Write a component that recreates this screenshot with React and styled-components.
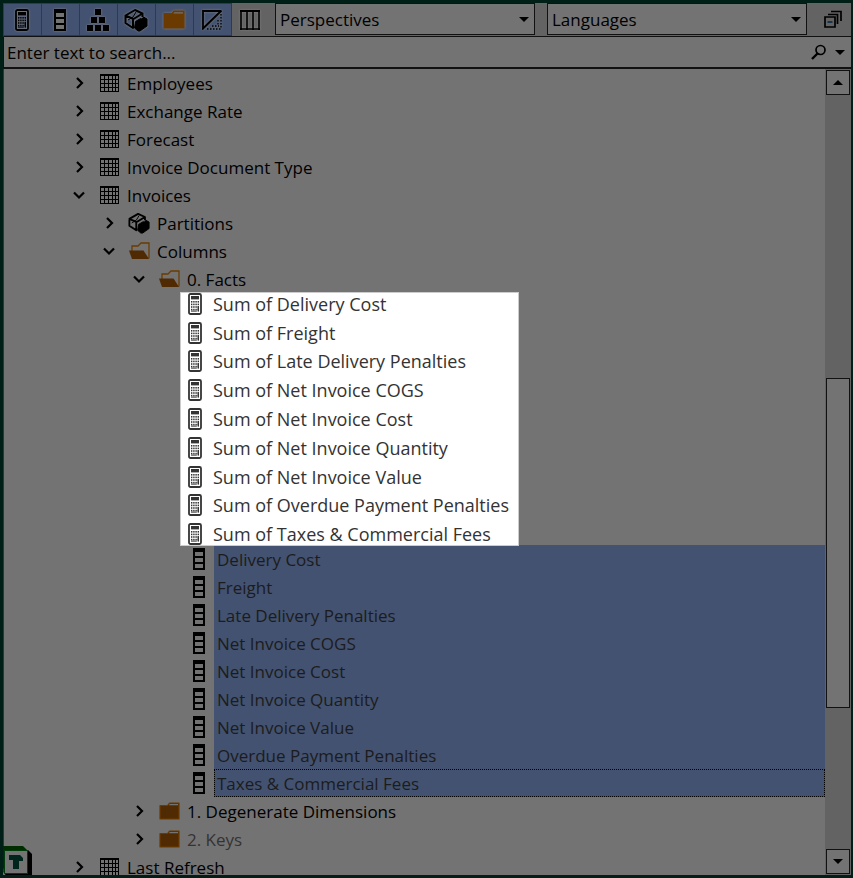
import React, { useState } from 'react'
import styled, { createGlobalStyle } from 'styled-components'


const tables = ['Employees', 'Exchange Rate', 'Forecast', 'Invoice Document Type']

const measures = [
  'Sum of Delivery Cost',
  'Sum of Freight',
  'Sum of Late Delivery Penalties',
  'Sum of Net Invoice COGS',
  'Sum of Net Invoice Cost',
  'Sum of Net Invoice Quantity',
  'Sum of Net Invoice Value',
  'Sum of Overdue Payment Penalties',
  'Sum of Taxes & Commercial Fees',
]

const columns = [
  'Delivery Cost',
  'Freight',
  'Late Delivery Penalties',
  'Net Invoice COGS',
  'Net Invoice Cost',
  'Net Invoice Quantity',
  'Net Invoice Value',
  'Overdue Payment Penalties',
  'Taxes & Commercial Fees',
]

// ---- icons ----

const CalculatorIcon = () => (
  <svg viewBox="0 0 14 22" width="14" height="22" fill="currentColor">
    <rect x="1" y="1" width="12" height="20" rx="1.5" fill="none" stroke="currentColor" strokeWidth="1.8" />
    <rect x="3" y="3" width="8" height="3.4" />
    {[8, 10.6, 13.2, 15.8].map((y) => (
      [3, 5.2, 7.4, 9.6].map((x) => <rect key={x + '-' + y} x={x} y={y} width="1.4" height="1.6" />)
    ))}
    <rect x="9.6" y="13.2" width="1.4" height="5.4" />
    <rect x="3" y="17.6" width="5.8" height="1" />
  </svg>
)

const ColumnIcon = () => (
  <svg viewBox="0 0 12 22" width="12" height="22">
    <path d="M0 0h12v22H0z" />
    <path d="M2 4h8v4H2zM2 10h8v4H2zM2 16h8v4H2z" fill="#737373" />
  </svg>
)

const HierarchyIcon = () => (
  <svg viewBox="0 0 24 22" width="24" height="22">
    <path d="M9 0h6v6H9zM5 8h6v6H5zM13 8h6v6h-6zM1 16h6v6H1zM9 16h6v6H9zM17 16h6v6h-6z" />
  </svg>
)

// outlined cube behind, solid cube in front
const CubesIcon = ({ size = 24 }) => (
  <svg viewBox="0 0 24 24" width={size} height={size}>
    <path d="M1.500 7.500 11 2l7.500 3.500L9.500 11zM1.500 7.500V15l7.500 5V11M18.500 5.500V9" fill="none" stroke="#000" strokeWidth="2" strokeLinejoin="round" />
    <path d="m4 12 5-3 3-5" fill="none" stroke="#000" strokeWidth="1" />
    <path d="m11.500 13.500 5-3 1.500.500 1.500-2L23 11v7l-7 5h-2l-3.500-3z" stroke="#000" strokeLinejoin="round" />
  </svg>
)

const FolderIcon = ({ size = 21, fill = '#4f2a02' }) => (
  <svg viewBox="0 0 21 18" width={size} height={size - 3}>
    <path d="M1 17V3.500h7.500l2-2.500H20v16z" fill={fill} stroke="#6b3c00" strokeWidth="1.200" strokeLinejoin="round" />
    <path d="M10.800 2H19v1.300H9.800z" fill="#737373" />
  </svg>
)

const FolderOpenIcon = () => (
  <svg viewBox="0 0 21 18" width="21" height="18">
    <path d="M3 9V4h6l3-3h8v15.500" fill="none" stroke="#6b3c00" strokeWidth="1.300" />
    <path d="M0 8.500h14.500l5.500 8.500H3z" fill="#4f2a02" />
  </svg>
)

const DiagonalIcon = () => (
  <svg viewBox="0 0 20 20" width="20" height="20" fill="none" stroke="#000">
    <path d="M1 18V1h18" strokeWidth="1.800" />
    <path d="M0 19.500 19.500.500" strokeWidth="2" />
    <path d="M5 19h14M19 4v15M10 16h7M16 10v6" strokeWidth="1.300" strokeDasharray="1.500 1.500" />
  </svg>
)

const ColumnsIcon = () => (
  <svg viewBox="0 0 20 20" width="20" height="20" fill="none" stroke="#000">
    <path d="M0 19h20M1 0v20M7 0v20M13 0v20M19 0v20" strokeWidth="1.600" />
    <path d="M0 1h20" strokeWidth="2" />
  </svg>
)

const TableIcon = () => (
  <svg viewBox="0 0 19 18" width="19" height="18" fill="none" stroke="#000" shapeRendering="crispEdges">
    <path d="M0 1h19" strokeWidth="2" />
    <path d="M0 5.500h19M0 9.500h19M0 13.500h19M0 17.500h19M.500 0v18M4.500 0v18M8.500 0v18M12.500 0v18M15.500 0v18M18.500 0v18" />
  </svg>
)

const CollapseIcon = () => (
  <svg viewBox="0 0 18 18" width="18" height="18" fill="none" stroke="#000">
    <path d="M1 7h10v10H1z" strokeWidth="1.700" />
    <path d="M4 4.500h9.500V14M7 1.500h10V11" strokeWidth="1.700" />
    <path d="M3.500 12h5" stroke="#0d2f4c" strokeWidth="1.700" />
  </svg>
)

const SearchIcon = () => (
  <svg viewBox="0 0 16 16" width="16" height="16" fill="none" stroke="#000">
    <circle cx="9.500" cy="6" r="4.500" strokeWidth="1.700" />
    <path d="M6.500 9.500 1 15" strokeWidth="2.400" />
  </svg>
)

const Triangle = ({ up }) => (
  <svg viewBox="0 0 10 5" width="10" height="5">
    <path d={up ? 'M0 5 5 0l5 5z' : 'M0 0h10L5 5z'} />
  </svg>
)

const Chevron = ({ open }) => (
  <svg viewBox="0 0 12 12" width="12" height="12" fill="none" stroke="#000" strokeWidth="2.200">
    <path d={open ? 'M1 3.500l5 5 5-5' : 'M4 1l5 5-5 5'} />
  </svg>
)

const LogoIcon = () => (
  <svg viewBox="0 0 32 32" width="32" height="32">
    <path d="m28 4 4 4v24H9l-5-4z" fill="#000" />
    <path d="M0 0h23l5 5v23H9L0 19z" fill="#002d00" />
    <path d="M0 22v10h8z" fill="#737373" />
    <path d="M4.500 4.500h23v23h-23z" fill="#737373" stroke="#003c08" />
    <path d="M9 9h11l3 3v3h-4v8h-6v-9H9z" fill="#00251c" />
  </svg>
)

// ---- tree ----

function TreeNode({ level = 0, open = false, icon, label, muted }) {
  return (
    <Row $level={level} role="treeitem" aria-expanded={open}>
      <Toggle aria-label={(open ? 'Collapse ' : 'Expand ') + label}>
        <Chevron open={open} />
      </Toggle>
      <IconBox>{icon}</IconBox>
      <Label $muted={muted}>{label}</Label>
    </Row>
  )
}

function App() {
  const [search, setSearch] = useState('')

  return (
    <Window>
      <GlobalStyle />
      <Toolbar>
        <ToolButton $active aria-label="Measures"><CalculatorIcon /></ToolButton>
        <ToolButton $active aria-label="Columns"><ColumnIcon /></ToolButton>
        <ToolButton $active aria-label="Hierarchies"><HierarchyIcon /></ToolButton>
        <ToolButton $active aria-label="Partitions"><CubesIcon /></ToolButton>
        <ToolButton $active aria-label="Display folders"><FolderIcon size={22} fill="#6b3a00" /></ToolButton>
        <ToolButton $active aria-label="Hidden objects"><DiagonalIcon /></ToolButton>
        <ToolButton aria-label="Metadata"><ColumnsIcon /></ToolButton>
        <Combos>
          <Combo>
            <select aria-label="Perspectives"><option>Perspectives</option></select>
            <Triangle />
          </Combo>
          <Combo>
            <select aria-label="Languages"><option>Languages</option></select>
            <Triangle />
          </Combo>
        </Combos>
        <CollapseButton aria-label="Collapse all"><CollapseIcon /></CollapseButton>
      </Toolbar>

      <SearchBar>
        <input
          aria-label="Search"
          placeholder="Enter text to search..."
          value={search}
          onChange={(e) => setSearch(e.target.value)}
        />
        <PlainButton aria-label="Find"><SearchIcon /></PlainButton>
        <PlainButton aria-label="Search options"><Triangle /></PlainButton>
      </SearchBar>

      <Body>
        <Tree role="tree">
          {tables.map((name) => <TreeNode key={name} icon={<TableIcon />} label={name} />)}
          <TreeNode open icon={<TableIcon />} label="Invoices" />
          <TreeNode level={1} icon={<CubesIcon size={22} />} label="Partitions" />
          <TreeNode level={1} open icon={<FolderOpenIcon />} label="Columns" />
          <TreeNode level={2} open icon={<FolderOpenIcon />} label="0. Facts" />

          <Spotlight>
            <MeasureList>
              {measures.map((name) => (
                <Measure key={name}>
                  <CalculatorIcon />
                  {name}
                </Measure>
              ))}
            </MeasureList>
          </Spotlight>

          {columns.map((name, i) => (
            <ColumnRow key={name} role="treeitem" aria-selected="true">
              <IconBox><ColumnIcon /></IconBox>
              <Selected $focused={i === columns.length - 1}>{name}</Selected>
            </ColumnRow>
          ))}

          <TreeNode level={2} icon={<FolderIcon />} label="1. Degenerate Dimensions" />
          <TreeNode level={2} icon={<FolderIcon />} label="2. Keys" muted />
          <TreeNode icon={<TableIcon />} label="Last Refresh" />
        </Tree>

        <Scrollbar>
          <ScrollButton aria-label="Scroll up"><Triangle up /></ScrollButton>
          <Space $grow={284} />
          <Thumb $grow={329} />
          <Space $grow={141} />
          <ScrollButton aria-label="Scroll down"><Triangle /></ScrollButton>
        </Scrollbar>
      </Body>

      <Logo><LogoIcon /></Logo>
    </Window>
  )
}

export default App

const GlobalStyle = createGlobalStyle`
    * {
      box-sizing: border-box;
    }

    body {
      margin: 0;
      background: #737373;
      color: #000;
      font-family: "Open Sans", "Noto Sans", sans-serif;
      font-size: 17px;
    }

    button, input, select {
      font: inherit;
      color: inherit;
    }

    svg {
      display: block;
      flex: none;
    }
`

const Window = styled.div`
    height: 100vh;
    display: flex;
    flex-direction: column;
    border: 3px solid #001f16;
    border-right-width: 2px;
    position: relative;
    overflow: hidden;
`

const Toolbar = styled.div`
    display: flex;
    flex: none;
    height: 34px;
    background: #636363;
    border-bottom: 1px solid #111;
    border-left: 1px solid #2b3a55;
`

const ToolButton = styled.button`
    width: 38px;
    height: 33px;
    flex: none;
    display: flex;
    align-items: center;
    justify-content: center;
    padding: 0 1px 0 0;
    border: 1px solid ${(p) => (p.$active ? '#2b3a55' : 'transparent')};
    border-left-width: 0;
    background: ${(p) => (p.$active ? '#435270' : 'none')};

    svg {
      filter: drop-shadow(0 0 1px #858585);
    }
`

const Combos = styled.div`
    flex: 1;
    display: flex;
    gap: 12px;
    margin-left: 5px;
`

const Combo = styled.div`
    flex: 1;
    height: 32px;
    display: grid;
    align-items: center;

    select {
      grid-area: 1 / 1;
      width: 100%;
      height: 100%;
      padding: 0 4px;
      appearance: none;
      background: #737373;
      border: 1px solid #111;
      border-radius: 0;
    }

    svg {
      grid-area: 1 / 1;
      justify-self: end;
      margin-right: 6px;
      pointer-events: none;
    }
`

const PlainButton = styled.button`
    display: flex;
    align-items: center;
    justify-content: center;
    padding: 0;
    border: 0;
    background: none;
`

const CollapseButton = styled(PlainButton)`
    width: 44px;
    padding-left: 8px;
    padding-bottom: 2px;
`

const SearchBar = styled.div`
    display: flex;
    flex: none;
    gap: 8px;
    height: 32px;
    padding-right: 6px;
    border-bottom: 2px solid #111;
    border-left: 1px solid #111;

    input {
      flex: 1;
      min-width: 0;
      padding: 0 3px;
      border: 0;
      outline: 0;
      background: none;
    }

    input::placeholder {
      color: #000;
      opacity: 1;
    }
`

const Body = styled.div`
    flex: 1;
    min-height: 0;
    display: flex;
    border-left: 1px solid #333;
`

const Tree = styled.div`
    flex: 1;
    min-width: 0;
    overflow: hidden;
`

const Row = styled.div`
    display: flex;
    align-items: center;
    height: 28px;
    padding-left: ${(p) => 65 + p.$level * 30}px;
`

const Toggle = styled(PlainButton)`
    width: 20px;
    height: 20px;
    margin-right: 10px;
`

const IconBox = styled.span`
    width: 20px;
    display: flex;
    flex: none;
    justify-content: center;
    margin-right: 5px;
`

const Label = styled.span`
    padding-left: 3px;
    white-space: nowrap;
    color: ${(p) => (p.$muted ? '#333' : '#000')};
`

const ColumnRow = styled(Row).attrs({ $level: 4 })`
    color: #1c1c1c;
`

const Selected = styled.span`
    flex: 1;
    height: 28px;
    line-height: 28px;
    padding-left: 2px;
    background: #435270;
    border: 1px ${(p) => (p.$focused ? 'dotted #000' : 'solid #435270')};
`

const Spotlight = styled.div`
    width: 339px;
    height: 254px;
    margin: -1px 0 -1px 176px;
    display: flex;
    align-items: center;
    overflow: hidden;
    position: relative;
    background: #fff;
    border: 1px solid #ccc;
`

const MeasureList = styled.ul`
    flex: 1;
    height: 259px;
    flex-shrink: 0;
    display: grid;
    grid-auto-rows: 1fr;
    margin: 0;
    padding: 0 0 0 7px;
    list-style: none;
`

const Measure = styled.li`
    display: flex;
    align-items: center;
    gap: 11px;
    color: #333;
    font-size: 18px;
    white-space: nowrap;
`

const Scrollbar = styled.div`
    width: 26px;
    flex: none;
    display: flex;
    flex-direction: column;
    padding: 1px;
    background: #636363;
`

const ScrollButton = styled(PlainButton)`
    height: 25px;
    flex: none;
    border: 1px solid #111;
    background: #737373;
`

const Space = styled.div`
    flex: ${(p) => p.$grow} 1 0;
`

const Thumb = styled(Space)`
    border: 1px solid #111;
    background: #737373;
`

const Logo = styled.div`
    position: absolute;
    left: -3px;
    bottom: -3px;
`
